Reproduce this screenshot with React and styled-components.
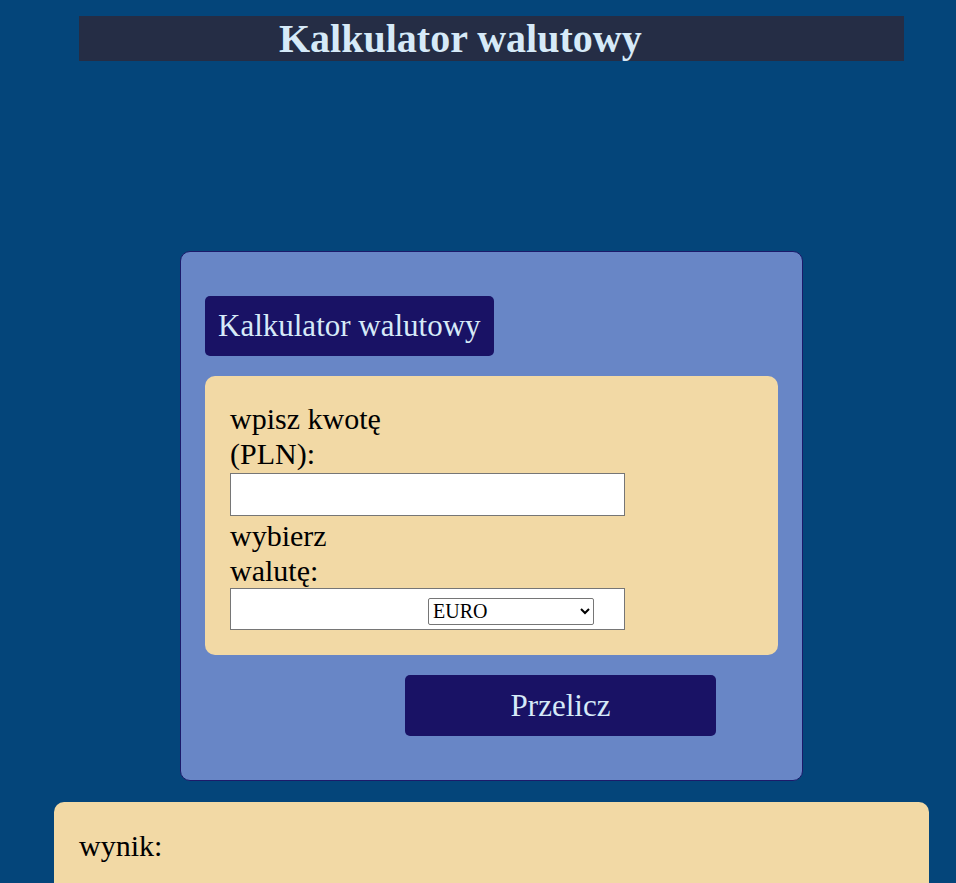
import React from 'react';
import styled, { createGlobalStyle } from 'styled-components';

const GlobalStyle = createGlobalStyle`
    html, body {
        margin: 0;
        padding: 0;
        background-color: #04457a;
        font-family: "Liberation Serif", "Times New Roman", serif;
    }
`;

const Page = styled.div`
    display: flex;
    flex-direction: column;
    height: 883px;
    overflow: hidden;
`;

const HeaderBar = styled.header`
    margin: 16px 52px 0 79px;
    height: 45px;
    padding-left: 200px;
    background-color: #252d45;
`;

const PageTitle = styled.h1`
    margin: 0;
    font-size: 40px;
    line-height: 45px;
    font-weight: bold;
    color: #d6eaf8;
`;

const Card = styled.main`
    box-sizing: border-box;
    width: 623px;
    margin: 190px 0 0 180px;
    padding: 44px 24px;
    background-color: #6886c6;
    border: 1px solid #1c1a6a;
    border-radius: 10px;
`;

const CardTitle = styled.div`
    display: inline-block;
    height: 60px;
    padding: 0 13px;
    line-height: 60px;
    font-size: 31px;
    color: #d6eaf8;
    background-color: #191265;
    border-radius: 5px;
`;

const FormBox = styled.section`
    margin-top: 20px;
    padding: 25px;
    background-color: #f2d9a5;
    border-radius: 10px;
`;

const Label = styled.label`
    display: block;
    width: 175px;
    font-size: 30px;
    line-height: 35px;
    color: #000;
`;

const AmountInput = styled.input`
    display: block;
    box-sizing: border-box;
    width: 395px;
    height: 43px;
    margin: 2px 0;
    border: 1px solid #767676;
    background: #fff;
    font-size: 20px;
`;

const SelectBox = styled.div`
    box-sizing: border-box;
    display: flex;
    align-items: center;
    justify-content: flex-end;
    width: 395px;
    height: 42px;
    padding: 4px 30px 0 0;
    background: #fff;
    border: 1px solid #767676;
`;

const CurrencySelect = styled.select`
    box-sizing: border-box;
    width: 166px;
    height: 27px;
    font-family: "Liberation Serif", "Times New Roman", serif;
    font-size: 20px;
    color: #000;
    background: #fff;
    border: 1px solid #767676;
    border-radius: 2px;
`;

const SubmitButton = styled.button`
    display: block;
    width: 311px;
    height: 61px;
    margin: 20px 0 0 200px;
    border: none;
    border-radius: 5px;
    background-color: #191265;
    color: #d6eaf8;
    font-family: "Liberation Serif", "Times New Roman", serif;
    font-size: 31px;
    cursor: pointer;
`;

const ResultBox = styled.section`
    box-sizing: border-box;
    margin: 21px 27px 0 54px;
    height: 90px;
    flex-shrink: 0;
    padding: 26px 25px;
    background-color: #f2d9a5;
    border-radius: 10px;
    font-size: 30px;
    line-height: 35px;
    color: #000;
`;

export default function App() {
    return (
        <Page>
            <GlobalStyle />
            <HeaderBar>
                <PageTitle>Kalkulator walutowy</PageTitle>
            </HeaderBar>
            <Card>
                <CardTitle>Kalkulator walutowy</CardTitle>
                <FormBox>
                    <Label htmlFor="kwota">wpisz kwotę (PLN):</Label>
                    <AmountInput id="kwota" type="number" />
                    <Label htmlFor="waluta">wybierz walutę:</Label>
                    <SelectBox>
                        <CurrencySelect id="waluta" defaultValue="EUR">
                            <option value="EUR">EURO</option>
                            <option value="USD">USD</option>
                            <option value="GBP">GBP</option>
                            <option value="CHF">CHF</option>
                        </CurrencySelect>
                    </SelectBox>
                </FormBox>
                <SubmitButton>Przelicz</SubmitButton>
            </Card>
            <ResultBox>wynik:</ResultBox>
        </Page>
    );
}
